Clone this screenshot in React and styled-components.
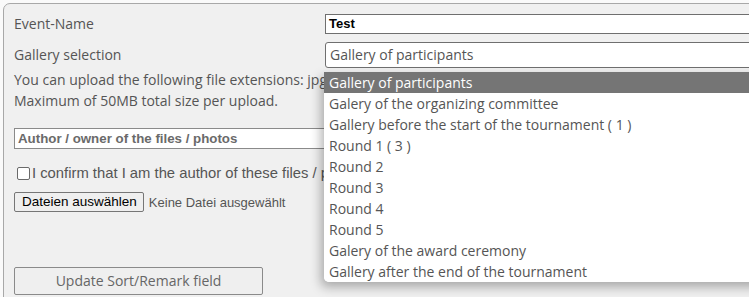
import React from "react";
import styled, { createGlobalStyle } from "styled-components";

const Global = createGlobalStyle`
  html, body { margin: 0; padding: 0; background: #fafafa; overflow: hidden; }
  body { width: 749px; height: 297px; }
`;

const uiFont = `"Open Sans", "Noto Sans", sans-serif`;
const arial = `"Liberation Sans", Arial, sans-serif`;

const Panel = styled.div`
  margin: 3px 0 0 3px;
  width: 900px;
  height: 320px;
  box-sizing: border-box;
  border: 1px solid #a8a8a8;
  border-radius: 7px 0 0 0;
  background: #f0f0f0;
  padding: 10px 0 0 10px;
  font-family: ${uiFont};
  font-size: 14px;
  color: #555;
`;

const FieldRow = styled.div`
  display: grid;
  grid-template-columns: 311px 1fr;
  align-items: center;
  margin-bottom: ${(p) => p.$mb || 0}px;
  position: relative;
`;

const Label = styled.div`
  line-height: 20px;
`;

const TextInput = styled.div`
  height: 20px;
  box-sizing: border-box;
  border: 1px solid #6f6f6f;
  background: #fff;
  font-family: ${arial};
  font-weight: bold;
  font-size: 13px;
  color: #000;
  padding-left: 3px;
  line-height: 18px;
`;

const SelectBox = styled.div`
  height: 26px;
  box-sizing: border-box;
  border: 1px solid #6f6f6f;
  border-radius: 3px 0 0 3px;
  background: #fff;
  padding-left: 4px;
  line-height: 24px;
  color: #555;
`;

const SelectWrap = styled.div`
  position: relative;
`;

const DropList = styled.ul`
  position: absolute;
  left: -1px;
  top: 30px;
  width: 460px;
  margin: 0;
  padding: 0;
  list-style: none;
  background: #fff;
  border-radius: 0 0 0 5px;
  box-shadow: -3px 5px 11px rgba(0, 0, 0, 0.3);
  z-index: 5;
  overflow: hidden;
`;

const Option = styled.li`
  height: 21px;
  line-height: 21px;
  padding-left: 5px;
  white-space: nowrap;
  background: ${(p) => (p.$active ? "#757575" : "#fff")};
  color: ${(p) => (p.$active ? "#fff" : "#555")};
`;

const Info = styled.div`
  line-height: 21px;
  white-space: nowrap;
  margin-top: 1px;
`;

const AuthorInput = styled.div`
  margin-top: 17px;
  width: 420px;
  height: 21px;
  box-sizing: border-box;
  border: 1px solid #8a8a8a;
  border-right: none;
  background: #fff;
  font-family: ${arial};
  font-weight: bold;
  font-size: 13.3px;
  color: #6a6a6a;
  padding-left: 3px;
  line-height: 19px;
`;

const CheckRow = styled.label`
  display: flex;
  align-items: center;
  height: 20px;
  margin-top: 14px;
  font-family: ${arial};
  font-size: 14.8px;
  color: #555;
  white-space: nowrap;
`;

const Check = styled.span`
  width: 13px;
  height: 13px;
  box-sizing: border-box;
  border: 1px solid #6a6a6a;
  border-radius: 2px;
  background: #fff;
  margin: 0 2px 0 3px;
`;

const FileRow = styled.div`
  display: flex;
  align-items: center;
  margin-top: 9px;
  font-family: ${arial};
  font-size: 13px;
`;

const FileButton = styled.div`
  height: 20px;
  box-sizing: border-box;
  border: 1px solid #767676;
  border-radius: 2px;
  background: #efefef;
  color: #000;
  padding: 0 6px 0 7px;
  line-height: 18px;
  font-size: 13.5px;
`;

const FileStatus = styled.span`
  margin-left: 5px;
  color: #555;
`;

const UpdateButton = styled.div`
  margin-top: 55px;
  width: 249px;
  height: 28px;
  box-sizing: border-box;
  border: 1px solid #8a8a8a;
  border-radius: 2px;
  background: #efefef;
  text-align: center;
  line-height: 26px;
  color: #666;
`;

const options = [
  "Gallery of participants",
  "Galery of the organizing committee",
  "Gallery before the start of the tournament ( 1 )",
  "Round 1 ( 3 )",
  "Round 2",
  "Round 3",
  "Round 4",
  "Round 5",
  "Galery of the award ceremony",
  "Gallery after the end of the tournament",
];

export default function App() {
  return (
    <>
      <Global />
      <Panel>
        <FieldRow $mb={8}>
          <Label>Event-Name</Label>
          <TextInput>Test</TextInput>
        </FieldRow>
        <FieldRow>
          <Label>Gallery selection</Label>
          <SelectWrap>
            <SelectBox>Gallery of participants</SelectBox>
            <DropList>
              {options.map((o, i) => (
                <Option key={o} $active={i === 0}>
                  {o}
                </Option>
              ))}
            </DropList>
          </SelectWrap>
        </FieldRow>
        <Info>
          You can upload the following file extensions: jpg, jpeg, png, gif
          <br />
          Maximum of 50MB total size per upload.
        </Info>
        <AuthorInput>Author / owner of the files / photos</AuthorInput>
        <CheckRow>
          <Check />I confirm that I am the author of these files / photos
        </CheckRow>
        <FileRow>
          <FileButton>Dateien auswählen</FileButton>
          <FileStatus>Keine Datei ausgewählt</FileStatus>
        </FileRow>
        <UpdateButton>Update Sort/Remark field</UpdateButton>
      </Panel>
    </>
  );
}
